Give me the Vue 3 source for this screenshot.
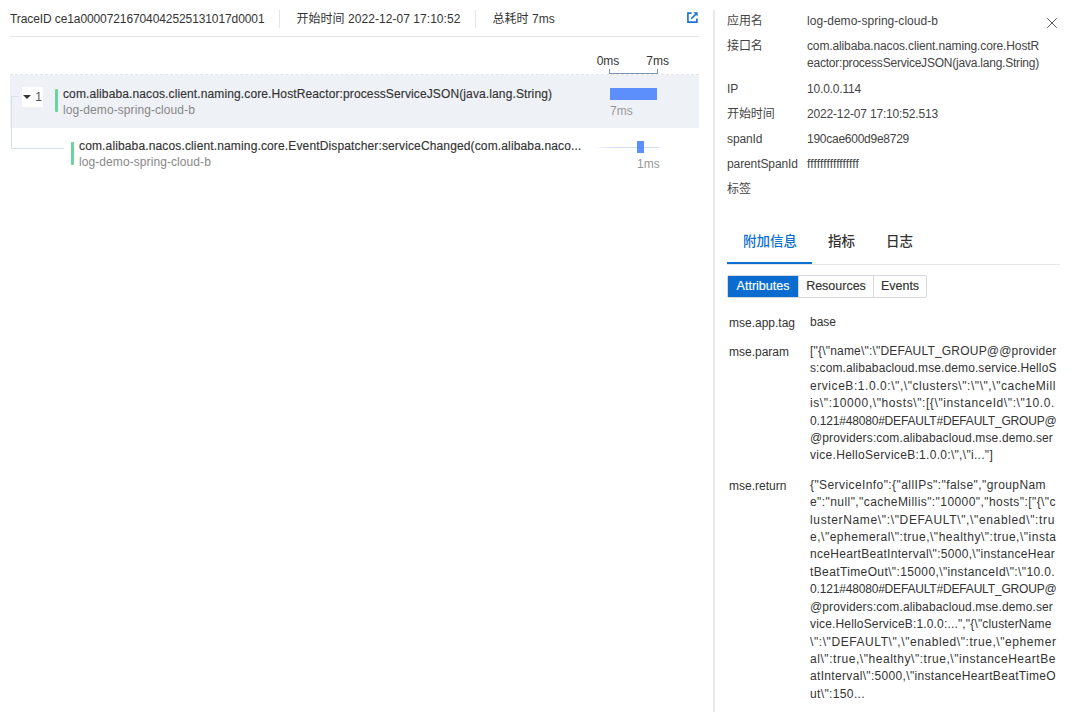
<script setup>
const ctx = document.createElement('canvas').getContext('2d')
ctx.font = '12px "Liberation Sans"'
// Letter spacing that makes a line fill the width it has in the reference's wrapped box.
const fit = (text, width) => ({
  letterSpacing: ((width - ctx.measureText(text).width) / text.length).toFixed(3) + 'px'
})

const info = [
  { k: '应用名', v: [['log-demo-spring-cloud-b', 131]] },
  { k: '接口名', v: [['com.alibaba.nacos.client.naming.core.HostR', 232], ['eactor:processServiceJSON(java.lang.String)', 232]] },
  { k: 'IP', v: [['10.0.0.114', 54]] },
  { k: '开始时间', v: [['2022-12-07 17:10:52.513', 131]] },
  { k: 'spanId', v: [['190cae600d9e8729', 102]] },
  { k: 'parentSpanId', v: [['ffffffffffffffff', 52]] },
  { k: '标签', v: [['', 0]] }
]
const attrs = [
  { k: 'mse.app.tag', v: [['base', 26]] },
  { k: 'mse.param', v: [
    ['["{\\"name\\":\\"DEFAULT_GROUP@@provider', 246.5],
    ['s:com.alibabacloud.mse.demo.service.HelloS', 246.5],
    ['erviceB:1.0.0:\\",\\"clusters\\":\\"\\",\\"cacheMill', 246],
    ['is\\":10000,\\"hosts\\":[{\\"instanceId\\":\\"10.0.', 245],
    ['0.121#48080#DEFAULT#DEFAULT_GROUP@', 246.5],
    ['@providers:com.alibabacloud.mse.demo.ser', 243],
    ['vice.HelloServiceB:1.0.0:\\",\\"i..."]', 183]
  ] },
  { k: 'mse.return', v: [
    ['{"ServiceInfo":{"allIPs":"false","groupNam', 236],
    ['e":"null","cacheMillis":"10000","hosts":["{\\"c', 246],
    ['lusterName\\":\\"DEFAULT\\",\\"enabled\\":tru', 245],
    ['e,\\"ephemeral\\":true,\\"healthy\\":true,\\"insta', 246.5],
    ['nceHeartBeatInterval\\":5000,\\"instanceHear', 245],
    ['tBeatTimeOut\\":15000,\\"instanceId\\":\\"10.0.', 245],
    ['0.121#48080#DEFAULT#DEFAULT_GROUP@', 246.5],
    ['@providers:com.alibabacloud.mse.demo.ser', 243],
    ['vice.HelloServiceB:1.0.0:...","{\\"clusterName', 241.5],
    ['\\":\\"DEFAULT\\",\\"enabled\\":true,\\"ephemer', 246.5],
    ['al\\":true,\\"healthy\\":true,\\"instanceHeartBe', 246],
    ['atInterval\\":5000,\\"instanceHeartBeatTimeO', 246],
    ['ut\\":150...', 55]
  ] }
]
</script>

<template>
  <div class="page">
    <section class="left">
      <header class="head">
        <span class="stat trace">TraceID ce1a00007216704042525131017d0001</span>
        <span class="stat sep">开始时间 2022-12-07 17:10:52</span>
        <span class="stat sep">总耗时 7ms</span>
        <svg class="open" width="11" height="11" viewBox="0 0 12 12" fill="none">
          <path d="M5 1.2H1v9.8h9.8V7" stroke="#1a73d1" stroke-width="1.8" />
          <path d="M4.6 7.4 10 2" stroke="#1a73d1" stroke-width="1.8" />
          <path d="M7 .4h4.6V5z" fill="#1a73d1" />
        </svg>
      </header>

      <div class="axis">
        <div class="axis-labels"><span>0ms</span><span>7ms</span></div>
        <div class="bracket"></div>
      </div>

      <div class="row row-a">
        <span class="h-line"></span>
        <span class="toggle"><i class="tri"></i>1</span>
        <span class="mark"></span>
        <div class="names">
          <div class="name name-a">com.alibaba.nacos.client.naming.core.HostReactor:processServiceJSON(java.lang.String)</div>
          <div class="svc">log-demo-spring-cloud-b</div>
        </div>
        <div class="timing">
          <div class="bar-wrap"><div class="bar full"></div></div>
          <div class="ms">7ms</div>
        </div>
      </div>

      <div class="row row-b">
        <span class="elbow"></span>
        <span class="mark"></span>
        <div class="names">
          <div class="name name-b">com.alibaba.nacos.client.naming.core.EventDispatcher:serviceChanged(com.alibaba.naco...</div>
          <div class="svc">log-demo-spring-cloud-b</div>
        </div>
        <div class="timing">
          <div class="bar-wrap lined"><div class="bar small"></div></div>
          <div class="ms ms-shift">1ms</div>
        </div>
      </div>
    </section>

    <aside class="detail">
      <svg class="close" width="10" height="10" viewBox="0 0 10 10" fill="none">
        <path d="M.3.3l9.4 9.4M9.7.3L.3 9.7" stroke="#555" stroke-width="1" />
      </svg>
      <div class="info">
        <div class="info-row" v-for="r in info" :key="r.k">
          <div class="info-k">{{ r.k }}</div>
          <div class="info-v">
            <div v-for="(l, i) in r.v" :key="i" class="line" :style="fit(l[0], l[1])">{{ l[0] }}</div>
          </div>
        </div>
      </div>

      <nav class="tabs">
        <span class="tab active">附加信息</span>
        <span class="tab">指标</span>
        <span class="tab">日志</span>
      </nav>

      <div class="seg">
        <span class="seg-btn on">Attributes</span>
        <span class="seg-btn res">Resources</span>
        <span class="seg-btn evt">Events</span>
      </div>

      <div class="attrs">
        <div class="attr" v-for="a in attrs" :key="a.k">
          <div class="attr-k">{{ a.k }}</div>
          <div class="attr-v">
            <div v-for="(l, i) in a.v" :key="i" class="attr-line" :style="fit(l[0], l[1])">{{ l[0] }}</div>
          </div>
        </div>
      </div>
    </aside>
  </div>
</template>

<style>
html, body { margin: 0; background: #fff; overflow: hidden; }
</style>

<style scoped>
.page {
  display: flex;
  width: 1080px;
  height: 712px;
  overflow: hidden;
  font-family: "Liberation Sans", "Noto Sans CJK SC", sans-serif;
  font-size: 12px;
  color: #333;
}
.left { width: 689px; margin-left: 10px; flex: none; }
.head {
  display: flex;
  align-items: center;
  height: 37px;
  padding-top: 1px;
  border-bottom: 1px solid #e3e5e8;
  box-sizing: border-box;
}
.stat { white-space: nowrap; line-height: 18px; letter-spacing: .05px; }
.trace { letter-spacing: -.1px; }
.sep { border-left: 1px solid #e3e5e8; margin-left: 15px; padding-left: 16px; }
.open { margin-left: auto; margin-right: 1px; margin-top: -2px; }
.axis {
  height: 38px;
  display: flex;
  flex-direction: column;
  align-items: flex-end;
  padding-right: 30px;
  box-sizing: border-box;
  border-bottom: 1px dashed #e3e5e8;
}
.axis-labels { display: flex; gap: 27px; margin-top: 16px; line-height: 16px; }
.bracket {
  width: 49px;
  height: 5px;
  margin: 0 11px 0 0;
  border: 1px solid #7d93b2;
  border-top: none;
  box-sizing: border-box;
}
.row { position: relative; display: flex; height: 53px; box-sizing: border-box; }
.row-a { background: #eef1f6; }
.h-line { position: absolute; left: 1px; top: 21px; width: 8px; height: 1px; background: #d6e0ee; }
.elbow {
  position: absolute; left: 1px; top: -32px; width: 53px; height: 53px;
  border-left: 1px solid #d6e0ee; border-bottom: 1px solid #d6e0ee; box-sizing: border-box;
}
.toggle {
  display: flex; align-items: center; justify-content: flex-end; gap: 4px;
  width: 21px; height: 20px; margin: 12px 0 0 12px; padding-right: 1px;
  background: #fff; color: #555; flex: none; box-sizing: border-box;
}
.tri { width: 0; height: 0; border-left: 4px solid transparent; border-right: 4px solid transparent; border-top: 4px solid #333; }
.mark { width: 3px; height: 23px; margin: 14px 5px 0 12px; background: #6bd3a0; border-radius: 1px; flex: none; }
.row-b .mark { margin: 14px 5px 0 61px; }
.names { flex: 1; min-width: 0; padding-top: 10px; }
.row-b .names { padding-top: 9px; }
.name { line-height: 18px; white-space: nowrap; -webkit-text-stroke: .15px #333; }
.name-a { letter-spacing: .12px; }
.name-b { letter-spacing: .14px; }
.svc { line-height: 18px; color: #888; margin-top: -2px; letter-spacing: .08px; }
.timing { width: 89px; flex: none; padding-top: 13px; }
.bar-wrap { height: 12px; position: relative; }
.bar { background: #5c8ffb; height: 12px; position: absolute; }
.bar.full { left: 0; width: 47px; }
.bar.small { left: 27px; width: 7px; }
.lined::before {
  content: ""; position: absolute; left: -16px; right: 40px; top: 6px; height: 1px;
  background: linear-gradient(90deg, #fff, #cfdcf2 30%);
}
.ms { color: #999; margin-top: 3px; line-height: 16px; }
.ms-shift { padding-left: 27px; }
.detail {
  position: relative;
  width: 367px;
  margin: 10px 0 0 14px;
  padding: 2px 0 0 12px;
  border-left: 2px solid #e6e8ec;
  box-sizing: border-box;
  flex: none;
}
.close { position: absolute; right: 23px; top: 8px; }
.info { margin-bottom: 30px; }
.info-row { display: flex; margin-bottom: 7px; min-height: 18px; }
.info-k { width: 80px; flex: none; line-height: 18px; color: #444; letter-spacing: -.1px; }
.info-v { color: #444; line-height: 17px; padding: 1px 0 0 0; }
.info-row:nth-child(2) .info-v { padding-bottom: 1px; }
.line { white-space: nowrap; }
.tabs { display: flex; height: 36px; border-bottom: 1px solid #e3e5e8; width: 333px; font-size: 13.5px; font-weight: 500; }
.tab { padding: 0 15px 0 16px; line-height: 28px; white-space: nowrap; }
.tab.active { color: #0a6fd0; border-bottom: 2px solid #0a6fd0; margin-bottom: -1px; height: 34px; }
.seg { display: inline-flex; margin-top: 10px; border: 1px solid #d5d9df; border-radius: 2px; font-size: 12.5px; }
.seg-btn { width: 70px; text-align: center; line-height: 21px; border-left: 1px solid #d5d9df; -webkit-text-stroke: .15px currentColor; }
.seg-btn:first-child { border-left: none; }
.seg-btn.res { width: 74px; }
.seg-btn.evt { width: 52px; }
.seg-btn.on { background: #0a6ccf; color: #fff; }
.attrs { margin-top: 15px; }
.attr { display: flex; margin-bottom: 11px; padding-left: 2px; }
.attr:first-child { margin-bottom: 9px; }
.attr-k { width: 81px; flex: none; line-height: 20px; }
.attr-line { line-height: 17.4px; white-space: nowrap; }
.attr-v { padding-top: 1px; }
</style>
